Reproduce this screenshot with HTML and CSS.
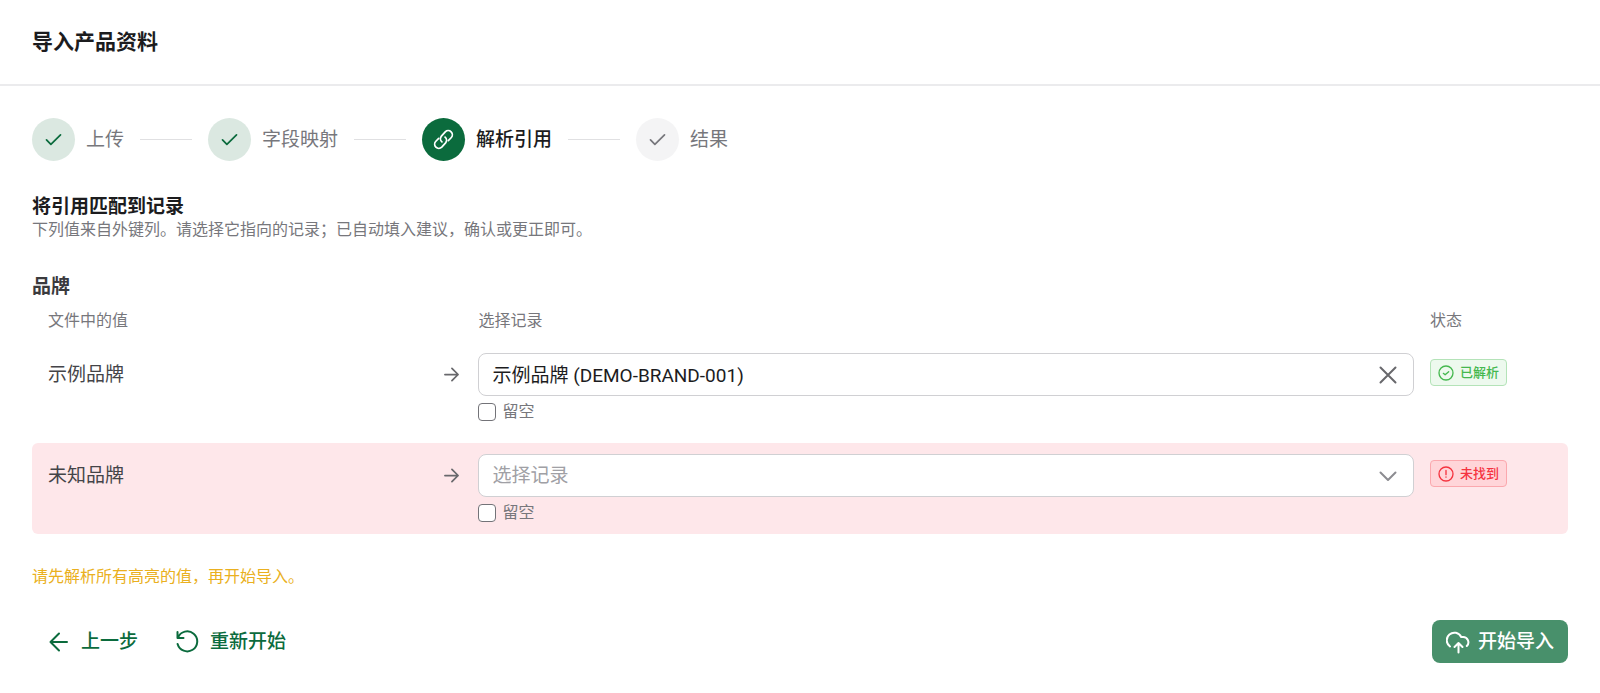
FILE: index.html
```html
<!DOCTYPE html>
<html lang="zh-CN">
<head>
<meta charset="utf-8">
<meta name="viewport" content="width=device-width, initial-scale=1">
<title>导入产品资料</title>
<link rel="stylesheet" href="styles.css">
</head>
<body>
<header class="header">
  <h1 class="header-title">导入产品资料</h1>
</header>
<main class="content">
  <ol class="steps">
    <li class="step done">
      <span class="step-dot"><svg class="icon" viewBox="0 0 24 24"><path d="M4 12.500l5 5L20 6.700"/></svg></span>
      <span>上传</span>
    </li>
    <li class="step done">
      <span class="step-dot"><svg class="icon" viewBox="0 0 24 24"><path d="M4 12.500l5 5L20 6.700"/></svg></span>
      <span>字段映射</span>
    </li>
    <li class="step active" aria-current="step">
      <span class="step-dot"><svg class="icon" viewBox="0 0 24 24"><path d="M10.200 14.700a4.800 4.800 0 0 1-.6-6.600l4.400-4.800a4.700 4.700 0 0 1 6.700 6.700l-3.200 3.200"/><path d="M13.800 9.300a4.800 4.800 0 0 1 .6 6.600L10 20.700A4.700 4.700 0 0 1 3.300 14l3.200-3.200"/></svg></span>
      <span>解析引用</span>
    </li>
    <li class="step">
      <span class="step-dot"><svg class="icon" viewBox="0 0 24 24"><path d="M4 12.500l5 5L20 6.700"/></svg></span>
      <span>结果</span>
    </li>
  </ol>

  <section class="intro">
    <h2 class="intro-title">将引用匹配到记录</h2>
    <p class="intro-text">下列值来自外键列。请选择它指向的记录；已自动填入建议，确认或更正即可。</p>
  </section>

  <section>
    <h3 class="group-title" id="brand">品牌</h3>
    <table class="table" aria-labelledby="brand">
      <thead class="table-head">
        <tr class="row head">
          <th class="cell">文件中的值</th>
          <th class="cell"></th>
          <th class="cell">选择记录</th>
          <th class="cell">状态</th>
        </tr>
      </thead>
      <tbody class="rows">
        <tr class="row">
          <td class="cell value">示例品牌</td>
          <td class="cell arrow"><svg class="icon" viewBox="0 0 24 24"><path d="M4.500 12h15M12.500 5l7 7-7 7"/></svg></td>
          <td class="cell">
            <div class="field">
              <input class="control" type="text" value="示例品牌 (DEMO-BRAND-001)" aria-label="示例品牌">
              <button class="clear" type="button" aria-label="清除"><svg class="icon" viewBox="0 0 24 24"><path d="M4.500 4.500l15 15M19.500 4.500l-15 15"/></svg></button>
            </div>
            <label class="check"><input class="box" type="checkbox">留空</label>
          </td>
          <td class="cell status">
            <span class="badge ok"><svg class="icon" viewBox="0 0 24 24"><circle cx="12" cy="12" r="10.500"/><path d="M8 12.500l2.700 2.300L16 10"/></svg>已解析</span>
          </td>
        </tr>
        <tr class="row missing">
          <td class="cell value">未知品牌</td>
          <td class="cell arrow"><svg class="icon" viewBox="0 0 24 24"><path d="M4.500 12h15M12.500 5l7 7-7 7"/></svg></td>
          <td class="cell">
            <div class="field">
              <select class="control empty" aria-label="未知品牌">
                <option>选择记录</option>
                <option>示例品牌 (DEMO-BRAND-001)</option>
              </select>
              <svg class="icon chevron" viewBox="0 0 24 24"><path d="M4.500 8.500l7.500 7.500 7.500-7.500"/></svg>
            </div>
            <label class="check"><input class="box" type="checkbox">留空</label>
          </td>
          <td class="cell status">
            <span class="badge error"><svg class="icon" viewBox="0 0 24 24"><circle cx="12" cy="12" r="10.500"/><path d="M12 6.800v6.200M12 16.500v.2"/></svg>未找到</span>
          </td>
        </tr>
      </tbody>
    </table>
  </section>

  <p class="warning">请先解析所有高亮的值，再开始导入。</p>

  <footer class="actions">
    <button class="button" type="button"><svg class="icon" viewBox="0 0 24 24"><path d="M20 12H3.500M12 3.500L3.500 12l8.500 8.500"/></svg>上一步</button>
    <button class="button" type="button"><svg class="icon" viewBox="0 0 24 24"><path d="M1.500 2v6h6M2 7.500A10 10 0 1 1 1.600 14"/></svg>重新开始</button>
    <button class="button primary" type="button"><svg class="icon" viewBox="0 0 24 24"><path d="M4 16.500A7.600 7.600 0 1 1 15.200 7h1.300a5.300 5.300 0 0 1 4.300 9M12.500 22.500v-9.500M8.500 17l4-4 4 4"/></svg>开始导入</button>
  </footer>
</main>
</body>
</html>
```
FILE: styles.css
```css
* { box-sizing: border-box; }

body {
  margin: 0;
  background: #fff;
  color: #1c1c1e;
  font-family: Roboto, "Noto Sans CJK SC", sans-serif;
  font-size: 19px;
  line-height: 24px;
}

h1, h2, h3, p, ol { margin: 0; padding: 0; }

input, select, button { font: inherit; color: inherit; }

.icon {
  display: block;
  flex: none;
  width: 24px;
  height: 24px;
  fill: none;
  stroke: currentColor;
  stroke-width: 2;
  stroke-linecap: round;
  stroke-linejoin: round;
}

.header {
  padding: 26px 32px;
  border-bottom: 2px solid #ebebed;
}

.header-title {
  font-size: 21px;
  font-weight: 700;
  line-height: 32px;
}

.content { padding: 32px; }

.steps {
  display: flex;
  align-items: center;
  list-style: none;
  color: #77777c;
}

.step {
  display: flex;
  align-items: center;
  gap: 11px;
}

.step + .step::before {
  content: "";
  width: 52px;
  height: 1px;
  margin: 0 5px 0 16px;
  background: #e0e0e2;
}

.step-dot {
  display: grid;
  place-items: center;
  width: 43px;
  height: 43px;
  border-radius: 50%;
  background: #f4f4f5;
}

.step-dot .icon { width: 21px; height: 21px; }
.done .step-dot { background: #dbe8e1; color: #0b6b3d; }
.active { color: #1c1c1e; font-weight: 500; }
.active .step-dot { background: #0b6b3d; color: #fff; }

.intro { margin-top: 34px; }
.intro-title { font-size: 19px; font-weight: 700; line-height: 23px; }
.intro-text { font-size: 16px; color: #77777c; }

.group-title {
  margin-top: 33px;
  font-size: 19px;
  font-weight: 700;
  color: #3a3a3d;
}

.table, .table-head { display: block; }

.rows {
  display: grid;
  gap: 10px;
}

.row {
  display: grid;
  grid-template-columns: 23fr 21px 57fr 122px;
  gap: 16px;
  padding: 11px 16px;
  border-radius: 6px;
}

.head {
  padding: 10px 16px 9px;
  font-size: 16px;
  color: #77777c;
}

.cell {
  min-width: 0;
  padding: 0;
  text-align: left;
  font-weight: 400;
}

.missing { background: #fee7ea; }
.value { line-height: 43px; color: #444448; }
.arrow { padding-top: 11px; color: #68686c; }
.arrow .icon { width: 21px; height: 21px; }

.field {
  display: flex;
  align-items: center;
  height: 43px;
  padding: 0 13px;
  border: 1px solid #d0d0d3;
  border-radius: 8px;
  background: #fff;
}

.control {
  flex: 1;
  min-width: 0;
  height: 100%;
  padding: 0 0 3px;
  border: 0;
  outline: 0;
  background: none;
  appearance: none;
}

.empty {
  padding: 0;
  color: #a0a0a5;
}

.clear {
  padding: 0;
  border: 0;
  background: none;
  color: #68686c;
}

.field .icon { width: 24px; height: 24px; }
.chevron { color: #8c8c91; pointer-events: none; }

.check {
  display: flex;
  align-items: center;
  gap: 6px;
  width: max-content;
  margin-top: 5px;
  font-size: 16px;
  line-height: 21px;
  color: #77777c;
}

.box {
  width: 18px;
  height: 18px;
  margin: 0;
  border: 1px solid #737378;
  border-radius: 4px;
  background: #fff;
  appearance: none;
}

.box:checked { background: #0b6b3d; }

.status { padding-top: 6px; }

.badge {
  display: inline-flex;
  align-items: center;
  gap: 6px;
  height: 27px;
  padding: 0 7px;
  border: 1px solid;
  border-radius: 4px;
  font-size: 13px;
  font-weight: 500;
}

.badge .icon { width: 16px; height: 16px; }
.ok { background: #edf9ee; border-color: #b4e3b8; color: #45b84f; }
.error { background: #ffd5d9; border-color: #fba8ae; color: #f5333f; }

.warning {
  margin-top: 31px;
  font-size: 16px;
  color: #eab020;
}

.actions {
  display: flex;
  gap: 8px;
  margin-top: 31px;
}

.button {
  display: flex;
  align-items: center;
  gap: 10px;
  height: 43px;
  padding: 0 15px;
  border: 0;
  border-radius: 8px;
  background: none;
  color: #0b6b3d;
  font-weight: 500;
}

.primary {
  gap: 8px;
  margin-left: auto;
  padding: 0 14px;
  background: #48906b;
  color: #fff;
}
```
